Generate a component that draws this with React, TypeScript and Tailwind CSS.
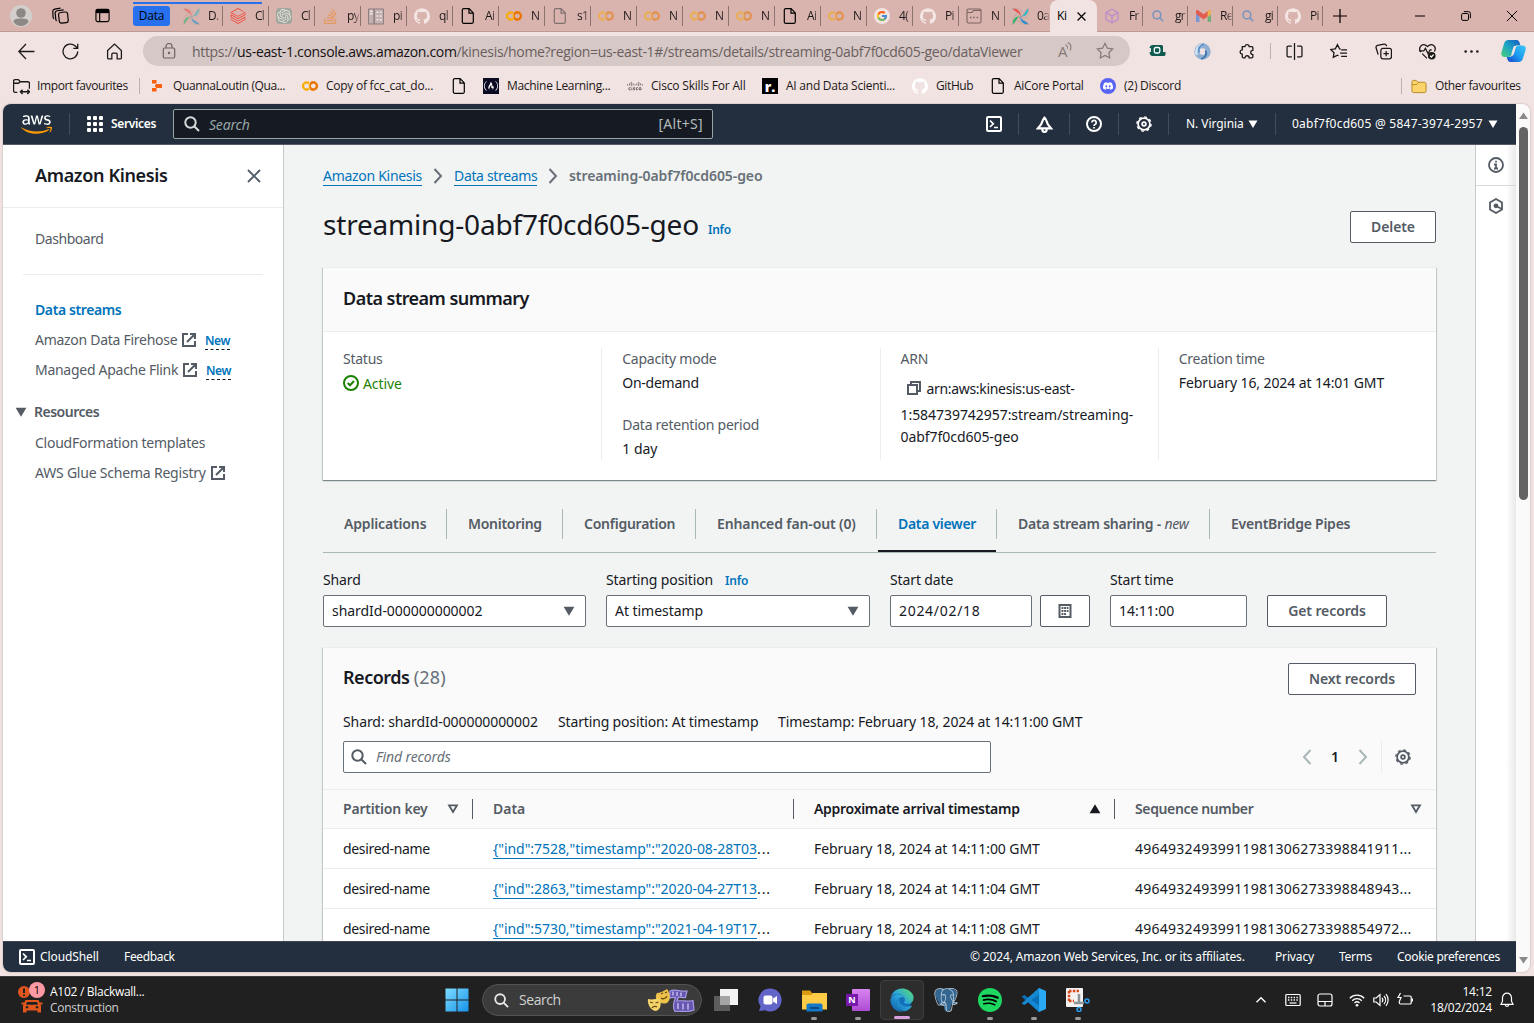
import React from "react";
import type { ReactNode } from "react";
import {
  SiApacheairflow, SiDatabricks, SiOpenai, SiStackoverflow, SiGooglecolab, SiGithub, SiSpotify,
  SiPostgresql, SiDiscord, SiCisco, SiFreecodecamp,
} from "react-icons/si";
import { FaAws, FaEdge } from "react-icons/fa";
import { FcGoogle } from "react-icons/fc";
import { Box } from "lucide-react";

/* ---------- shared icons ---------- */

type SvgProps = { className?: string; size?: number; sw?: number; children: ReactNode };

function Svg16({ className = "", size = 16, sw = 2, children }: SvgProps) {
  return (
    <svg width={size} height={size} viewBox="0 0 16 16" fill="none" stroke="currentColor" strokeWidth={sw} className={"shrink-0 " + className}>
      {children}
    </svg>
  );
}

const PageIcon = ({ className = "" }: { className?: string }) => (
  <Svg16 sw={1.2} className={className}>
    <path d="M3.5.7h5.6l4.2 4.2v9.2a1.2 1.2 0 0 1-1.2 1.2H3.5a1.2 1.2 0 0 1-1.2-1.2V1.9A1.2 1.2 0 0 1 3.5.7zM9 .9v4.2h4.2" />
  </Svg16>
);
const External = () => (
  <Svg16 className="text-[#545b64]">
    <path d="M7 2H2v12h12V9M9 2h5v5M6 10l7.500-7.500" />
  </Svg16>
);
const SearchIcon = ({ className = "", size = 16 }: { className?: string; size?: number }) => (
  <Svg16 size={size} className={className}>
    <circle cx="6.5" cy="6.5" r="5.2" />
    <path d="m15 15-4.800-4.800" />
  </Svg16>
);
const Gear = ({ className = "" }: { className?: string }) => (
  <Svg16 sw={1.8} className={"overflow-visible " + className}>
    <circle cx="8" cy="8" r="5.9" />
    <circle cx="8" cy="8" r="7.100" strokeWidth="1.4" strokeDasharray="2.79 2.79" />
    <circle cx="8" cy="8" r="1.9" strokeWidth="1.7" />
  </Svg16>
);
const Shell = () => (
  <Svg16>
    <rect x="1" y="1" width="14" height="14" rx="1" />
    <path d="m4 4.500 3.300 3.300L4 11M8 11.500h4" strokeWidth="1.7" />
  </Svg16>
);
const Chevron = ({ className = "", left = false }: { className?: string; left?: boolean }) => (
  <Svg16 className={className}>
    <path d={left ? "M11.500 1 5 8l6.500 7" : "M4.500 1 11 8l-6.500 7"} />
  </Svg16>
);
const CaretDown = ({ className = "", w = 12 }: { className?: string; w?: number }) => (
  <svg width={w} height={w} viewBox="0 0 12 12" className={"shrink-0 " + className} fill="currentColor">
    <path d="M.6 1.800h10.800L6 10.800z" />
  </svg>
);
const SortIcon = () => (
  <Svg16 size={12} sw={2.5} className="mt-1 text-[#545b64]">
    <path d="M2.800 3.200h10.400L8 12z" />
  </Svg16>
);

/* ---------- browser tab strip ---------- */

const AirflowMark = () => (
  <span className="relative block h-[17px] w-[17px]">
    <svg width="17" height="17" viewBox="0 0 16 16" className="absolute inset-0">
      <path d="M8 8C7 4 3 4 .5.800 5 .2 8.500 3 8 8z" fill="#e8564c" />
      <path d="M8 8c4-1 4-5 7.200-7.500C15.800 5 13 8.500 8 8z" fill="#33b8c4" />
      <path d="M8 8c1 4 5 4 7.500 7.200C11 15.800 7.500 13 8 8z" fill="#2b8fd0" />
      <path d="M8 8c-4 1-4 5-7.200 7.500C.2 11 3 7.500 8 8z" fill="#35b46a" />
    </svg>
    <SiApacheairflow className="absolute inset-0 h-[17px] w-[17px] text-[#5a5a60] opacity-30" />
  </span>
);
const Colab = ({ dim = false }: { dim?: boolean }) => (
  <span className={dim ? "relative h-4 w-4 opacity-50" : "relative h-4 w-4"}>
    <SiGooglecolab className="absolute inset-0 h-4 w-4 text-[#f9ab00]" />
    <SiGooglecolab className="absolute inset-0 h-4 w-4 text-[#e8710a] [clip-path:inset(0_0_0_50%)]" />
  </span>
);
const Hub = () => <SiGithub className="h-4 w-4 text-[#f4e6e4]" />;
const Lens = () => (
  <span className="text-[#5c8cc4] opacity-80"><SearchIcon size={12} /></span>
);
const Gmail = () => (
  <svg width="15" height="12" viewBox="0 0 15 12" className="opacity-80">
    <path d="M0 1v11h3.400V5z" fill="#5f8fe0" />
    <path d="M15 1v11h-3.400V5z" fill="#5fae72" />
    <path d="M0 1.500C0 0 1.500-.3 2.500.4l5 3.800 5-3.800C13.500-.3 15 0 15 1.500V4l-7.500 5.500L0 4z" fill="#e5473c" />
    <path d="M11.600 1v6L15 4.400V1.500C15 0 13.500-.3 12.500.4z" fill="#f0b43a" />
  </svg>
);
const NotebookTab = () => (
  <Svg16 sw={1.1} className="text-[#7d6462]">
    <path d="M2.500 1h11A1.500 1.500 0 0 1 15 2.500v11a1.500 1.500 0 0 1-1.500 1.500h-11A1.500 1.500 0 0 1 1 13.500v-11A1.500 1.500 0 0 1 2.500 1zM1 4.500h5l1.500-2H15" />
    <path d="M4 9.500h1.500M7.300 9.500h1.500M10.600 9.500h1.500" strokeWidth="1.5" />
  </Svg16>
);
const ListTab = () => (
  <svg width="17" height="17" viewBox="0 0 17 17" className="opacity-70">
    <path d="M.5.500h6v16h-6zM6.500.500h10v16h-10z" fill="#b9aeb0" stroke="#6b6268" />
    <path d="M2 3h3M2 5.500h3M9 4h2M12.500 4h2M9 8h2M12.500 8h2M9 12h2M12.500 12h2" stroke="#fff" strokeWidth="1.6" />
  </svg>
);

const openTabs: { icon: ReactNode; label: string }[] = [
  { icon: <span className="opacity-60"><AirflowMark /></span>, label: "D." },
  { icon: <SiDatabricks className="h-4 w-4 text-[#f0483a]" />, label: "Cl" },
  { icon: <span className="flex h-4 w-4 items-center justify-center rounded-sm bg-[#9fa79c]"><SiOpenai className="h-3.5 w-3.5 text-[#e3dfdb]" /></span>, label: "Cl" },
  { icon: <SiStackoverflow className="h-[15px] w-[15px] text-[#e59a63]" />, label: "py" },
  { icon: <ListTab />, label: "pi" },
  { icon: <Hub />, label: "ql" },
  { icon: <PageIcon className="text-black" />, label: "Ai" },
  { icon: <Colab />, label: "N" },
  { icon: <PageIcon className="text-[#80706f]" />, label: "s1" },
  { icon: <Colab dim />, label: "N" },
  { icon: <Colab dim />, label: "N" },
  { icon: <Colab dim />, label: "N" },
  { icon: <Colab dim />, label: "N" },
  { icon: <PageIcon className="text-black" />, label: "Ai" },
  { icon: <Colab dim />, label: "N" },
  { icon: <span className="flex h-4 w-4 items-center justify-center rounded-full bg-[#f1e3e1]"><FcGoogle className="h-3 w-3 opacity-80" /></span>, label: "4(" },
  { icon: <Hub />, label: "Pi" },
  { icon: <NotebookTab />, label: "N" },
];
const lastTabs: { icon: ReactNode; label: string }[] = [
  { icon: <Box className="h-4 w-4 text-[#c08fc8]" strokeWidth={2.2} />, label: "Fr" },
  { icon: <Lens />, label: "gr" },
  { icon: <Gmail />, label: "Re" },
  { icon: <Lens />, label: "gi" },
  { icon: <Hub />, label: "Pi" },
];

function StripTab({ icon, label, w, sep = true }: { icon: ReactNode; label: string; w: string; sep?: boolean }) {
  return (
    <div className={"flex h-8 shrink-0 items-center pl-[7px] " + w}>
      <span className="flex w-4 shrink-0 justify-center">{icon}</span>
      <span className="ml-[9px] w-[12px] shrink-0 bg-[linear-gradient(to_right,#1b1818_55%,#b89690)] bg-clip-text text-[12px] tracking-[-0.7px] whitespace-nowrap text-transparent">{label}</span>
      <span className={sep ? "ml-auto h-5 w-px shrink-0 bg-[#8d7471]" : "hidden"} />
    </div>
  );
}

function TabStrip() {
  return (
    <div className="flex h-8 shrink-0 border-b border-[#bd9b96] bg-[#d9b3ad]">
      <div className="flex w-[133px] shrink-0 items-center">
        <svg width="22" height="22" viewBox="0 0 22 22" className="ml-[10px]">
          <circle cx="11" cy="11" r="11" fill="#d2cfcd" />
          <circle cx="11" cy="8" r="4.800" fill="#8c8885" />
          <path d="M3.500 17c0-3 3-3.500 7.500-3.500s7.500.5 7.500 3.500c-2 2.800-4.500 4-7.500 4s-5.500-1.200-7.500-4z" fill="#8c8885" />
        </svg>
        <Svg16 sw={1.1} size={17} className="ml-[20px] text-black">
          <rect x="6.500" y="5" width="8.500" height="10" rx="2" transform="rotate(-6 10 10)" />
          <path d="M4.500 13a1.600 1.600 0 0 1-.9-1.200L3 6a2.200 2.200 0 0 1 2-2.500l6-.8M2 11a1.600 1.600 0 0 1-1-1.300L.8 4.500A2.200 2.200 0 0 1 2.500 2L8 1" />
        </Svg16>
        <Svg16 sw={1.2} size={15} className="ml-[26px] text-black">
          <rect x="1" y="1.500" width="14" height="13" rx="2" />
          <path d="M1 3.500h14" strokeWidth="4" />
          <path d="M5 5v9" />
        </Svg16>
      </div>
      <div className="flex h-8 w-[43px] shrink-0 items-center">
        <div className="flex h-5 w-[37px] items-center justify-center rounded-[3px] bg-[#2771ee] text-[12px] tracking-[-0.2px] text-black">Data</div>
      </div>
      {openTabs.map((t, i) => (
        <StripTab key={i} icon={t.icon} label={t.label} w={i === 0 ? "w-[47px]" : "w-[46px]"} />
      ))}
      <StripTab icon={<AirflowMark />} label="0a" w="w-[45px]" sep={false} />
      <div className="flex h-8 w-[47px] shrink-0 items-center rounded-t-lg bg-[#f1e3e1] pl-[7px]">
        <span className="w-[12px] text-[12px] tracking-[-0.4px] whitespace-nowrap">Ki</span>
        <Svg16 size={9} sw={2.2} className="ml-2 text-black"><path d="m1 1 14 14M15 1 1 15" /></Svg16>
      </div>
      {lastTabs.map((t, i) => (
        <StripTab key={i} icon={t.icon} label={t.label} w={i === 0 ? "w-[46px]" : "w-[45px]"} />
      ))}
      <div className="flex flex-1 items-center text-black">
        <Svg16 size={14} sw={1.4} className="ml-[10px]"><path d="M8 0v16M0 8h16" /></Svg16>
        <Svg16 size={10} sw={1.6} className="ml-[68px]"><path d="M0 8h16" /></Svg16>
        <Svg16 size={10} sw={1.6} className="ml-[36px]">
          <rect x="1" y="4" width="11" height="11" rx="2" />
          <path d="M4.500 1H12a3 3 0 0 1 3 3v7.500" />
        </Svg16>
        <Svg16 size={10} sw={1.6} className="ml-[36px]"><path d="m0 0 16 16M16 0 0 16" /></Svg16>
      </div>
    </div>
  );
}

/* ---------- address bar ---------- */

function Toolbar() {
  return (
    <div className="flex h-9 shrink-0 items-center pt-[2px] text-[#1b1818]">
      <Svg16 sw={1.2} size={17} className="ml-[18px]"><path d="M15.500 8H.800M7.500 1 .800 8l6.700 7" /></Svg16>
      <Svg16 sw={1.2} size={17} className="ml-[27px]"><path d="M14.800 8A6.900 6.900 0 1 1 12.500 2.800L14.800 5M14.800.800V5h-4.200" /></Svg16>
      <Svg16 sw={1.2} size={17} className="ml-[27px]"><path d="M1.500 7 8 1l6.500 6v7.200a.8.8 0 0 1-.8.8h-3.200V10.500a1 1 0 0 0-1-1h-3a1 1 0 0 0-1 1V15H2.300a.8.8 0 0 1-.8-.8z" /></Svg16>
      <div className="ml-[20px] flex h-[30px] w-[987px] items-center rounded-full bg-[#d6c8c6]">
        <Svg16 sw={1.2} className="ml-[18px] text-[#6e6361]">
          <rect x="2.300" y="5" width="11.400" height="10" rx="1.500" />
          <path d="M5 5V3.500a3 3 0 0 1 6 0V5" />
          <circle cx="8" cy="10" r=".6" fill="currentColor" />
        </Svg16>
        <span className="ml-[15px] w-[846px] whitespace-nowrap text-[14px] tracking-[-0.33px] text-[#6a5f5e]">
          https://<span className="text-[#151112]">us-east-1.console.aws.amazon.com</span>/kinesis/home?region=us-east-1#/streams/details/streaming-0abf7f0cd605-geo/dataViewer
        </span>
        <span className="ml-[20px] flex w-[19px] items-start text-[#857a79]">
          <span className="text-[15px] leading-5">A</span>
          <Svg16 size={9} sw={1.8} className="mt-[1px] -ml-[3px]"><path d="M1 5c3 1 4 4 3 7M5 1c6 3 7 8 4 14" /></Svg16>
        </span>
        <Svg16 sw={1.1} size={18} className="ml-[19px] text-[#857a79]"><path d="m8 1.200 2.100 4.300 4.700.7-3.400 3.300.8 4.700L8 12l-4.200 2.200.8-4.700L1.200 6.200l4.700-.7z" /></Svg16>
      </div>
      <svg width="17" height="14" viewBox="0 0 17 14" className="ml-[19px]">
        <path d="M4 1h8.500a1.500 1.500 0 0 1 1.500 1.500V8h2.500v3l-1 1H3.800a3 3 0 0 1-3-3L.5 8H2V4H.5A3.500 3.500 0 0 1 4 1z" fill="#0d5a50" />
        <rect x="5.300" y="3.500" width="5.500" height="5.500" rx="1.500" fill="none" stroke="#fff" strokeWidth="1.300" />
      </svg>
      <svg width="17" height="17" viewBox="0 0 17 17" className="ml-[28px]">
        <circle cx="8.500" cy="8.500" r="5.700" fill="none" stroke="#8fb0d2" strokeWidth="5" />
        <path d="M3 12C1 8 3 3 8 2" fill="none" stroke="#cfe0f0" strokeWidth="2.500" />
        <path d="M10 1c-4 1.500-6.500 4-4.500 8.500" fill="none" stroke="#5d8fc4" strokeWidth="1.800" />
        <path d="M7 16c4-1.500 6.500-4 4.500-8.500" fill="none" stroke="#3f74ad" strokeWidth="1.800" />
      </svg>
      <Svg16 sw={1.2} size={17} className="ml-[27px]"><path d="M4 3.500h2.500a2 2 0 0 1 4 0H13a1 1 0 0 1 1 1V7a2 2 0 0 0 0 4v2a1 1 0 0 1-1 1h-2.500a2 2 0 0 0-4 0H5a1 1 0 0 1-1-1v-2.500a2 2 0 0 1 0-4z" /></Svg16>
      <span className="ml-[15px] h-4 w-px bg-[#bdb0ae]" />
      <Svg16 sw={1.2} size={17} className="ml-[15px]"><path d="M8 0v16M5.500 3H2a1 1 0 0 0-1 1v8a1 1 0 0 0 1 1h3.500M10.500 3H14a1 1 0 0 1 1 1v8a1 1 0 0 1-1 1h-3.500" /></Svg16>
      <Svg16 sw={1.2} size={17} className="ml-[27px]"><path d="M10 6 9 5.500 7 1.500 5 5.500l-4.300.6 3.100 3-.7 4.400L7 11.400l1 .600M10.500 6.500H16M9.500 9.500H16M10.500 12.500H16" /></Svg16>
      <Svg16 sw={1.2} size={17} className="ml-[28px]"><rect x="5.500" y="5" width="10" height="10" rx="2" /><path d="M10.500 7.500v5M8 10h5M3 11 1 4.500a2 2 0 0 1 1.300-2.300L8.500 1a2 2 0 0 1 2.200 1.500L11 3" /></Svg16>
      <Svg16 sw={1.2} size={17} className="ml-[27px]"><path d="M1.800 8.500C.4 6.500.3 4 2 2.500s4-1.200 6 .8c2-2 4.300-2.300 6-.800s1.600 3.500.5 5.500M0 7.500h4.500L6 5l2.500 5 2-3.500H12M3 10l4.500 4.500" /><circle cx="12" cy="12" r="3.600" fill="currentColor" stroke="none" /><path d="m10.500 12 1.200 1.200 2-2.200" stroke="#fff" /></Svg16>
      <Svg16 size={17} className="ml-[27px]"><g fill="currentColor" stroke="none"><circle cx="2.500" cy="8" r="1.200" /><circle cx="8" cy="8" r="1.200" /><circle cx="13.500" cy="8" r="1.200" /></g></Svg16>
      <svg width="25" height="24" viewBox="0 0 25 24" className="ml-[21px]">
        <defs>
          <linearGradient id="cpa" x1="0" y1="1" x2="1" y2="0"><stop offset="0" stopColor="#4bd07c" /><stop offset=".5" stopColor="#1ea5c4" /><stop offset="1" stopColor="#1457c0" /></linearGradient>
          <linearGradient id="cpb" x1="0" y1="1" x2="1" y2="0"><stop offset="0" stopColor="#1a43c8" /><stop offset=".5" stopColor="#1c9df0" /><stop offset="1" stopColor="#3ec6f5" /></linearGradient>
        </defs>
        <path d="M7.500 1h8c2 0 2.700 1.500 3.200 3l.6 2.500c-4-1-6 .5-6.800 3l-1.500 5c-.6 2-1.700 3.500-4 3.500H3.500C.5 18-.3 15.500.5 13L3.300 4C4 2 5.500 1 7.500 1z" fill="url(#cpa)" />
        <path d="M17.500 23h-8c-2 0-2.700-1.500-3.200-3l-.6-2c4 .5 6.500-1 7.300-3.500l1.500-5c.6-2 1.700-3 4-3h3c3 0 3.800 2.500 3 5l-2.800 8.500c-.7 2-2.200 3-4.200 3z" fill="url(#cpb)" />
        <path d="m11.500 14.500 2-6.500" stroke="#f1e3e1" strokeWidth="2" strokeLinecap="round" />
      </svg>
    </div>
  );
}

/* ---------- bookmarks ---------- */

function Mark({ icon, text, w, track = "tracking-[-0.38px]" }: { icon: ReactNode; text?: string; w: string; track?: string }) {
  return (
    <div className={"flex shrink-0 items-center gap-2 " + w}>
      <span className="flex w-4 shrink-0 justify-center">{icon}</span>
      <span className={"whitespace-nowrap text-[12px] " + track}>{text}</span>
    </div>
  );
}

function Bookmarks() {
  return (
    <div className="flex h-9 shrink-0 items-center pl-[13px] text-[#1b1818]">
      <Mark w="w-[126px]" text="Import favourites" icon={<Svg16 sw={1.3} size={17}><path d="M4 13.500H2a1.500 1.500 0 0 1-1.500-1.500V3A1.500 1.500 0 0 1 2 1.500h3l2 2h7A1.500 1.500 0 0 1 15.500 5v5M.5 5H5l2-1.500M7 13h8M9 11l-2 2 2 2M13.500 11l2 2-2 2" /></Svg16>} />
      <span className="mr-[9px] h-4 w-px bg-[#bdb0ae]" />
      <Mark w="w-[153px]" text="QuannaLoutin (Qua..." icon={<svg width="12" height="12" viewBox="0 0 12 12" fill="#f9610f"><path d="M1 0h4.500v3.500H1zM1 8h4.500v3.500H1zM5.500 4H11v4H5.500L4 6.500V5z" /></svg>} />
      <Mark w="w-[149px]" text="Copy of fcc_cat_do..." track="tracking-[-0.25px]" icon={<Colab />} />
      <Mark w="w-[32px]" icon={<PageIcon className="text-black" />} />
      <Mark w="w-[144px]" text="Machine Learning..." track="tracking-[-0.3px]" icon={<span className="flex h-4 w-4 items-center justify-center bg-[#0a0a23]"><SiFreecodecamp className="h-3.5 w-3.5 text-white" /></span>} />
      <Mark w="w-[135px]" text="Cisco Skills For All" track="tracking-[-0.19px]" icon={<SiCisco className="h-4 w-4 text-[#4a4445]" />} />
      <Mark w="w-[150px]" text="AI and Data Scienti..." track="tracking-[-0.24px]" icon={<span className="flex h-4 w-4 items-end justify-center bg-black text-[14px] leading-[15px] font-black text-white">r.</span>} />
      <Mark w="w-[78px]" text="GitHub" icon={<SiGithub className="h-4 w-4 text-white" />} />
      <Mark w="w-[110px]" text="AiCore Portal" track="tracking-[-0.3px]" icon={<PageIcon className="text-black" />} />
      <Mark w="w-[120px]" text="(2) Discord" track="tracking-[-0.25px]" icon={<span className="flex h-4 w-4 items-center justify-center rounded-full bg-[#5865f2]"><SiDiscord className="h-2.5 w-2.5 text-white" /></span>} />
      <span className="mr-[9px] ml-auto h-4 w-px bg-[#bdb0ae]" />
      <Mark w="w-[123px]" text="Other favourites" icon={<svg width="17" height="15" viewBox="0 0 17 15"><path d="M1 3a2 2 0 0 1 2-2h2.500l2 2H14a2 2 0 0 1 2 2v7a2 2 0 0 1-2 2H3a2 2 0 0 1-2-2z" fill="#fbd56b" stroke="#b3881f" /><path d="M1 5.500h5L8 3.300" fill="none" stroke="#b3881f" /></svg>} />
    </div>
  );
}

/* ---------- AWS chrome ---------- */

const HSep = ({ className }: { className: string }) => <span className={"h-[22px] w-px shrink-0 bg-[#414d5c] " + className} />;

function AwsHeader() {
  return (
    <div className="flex h-[41px] shrink-0 items-center border-b border-[#545b64] bg-[#232f3e] font-['Noto_Sans'] text-white">
      <span className="relative ml-[18px] h-[31px] w-[32px] shrink-0">
        <FaAws className="absolute inset-0 h-[31px] w-[31px] [clip-path:inset(0_0_45%_0)]" />
        <FaAws className="absolute inset-0 h-[31px] w-[31px] text-[#ff9900] [clip-path:inset(55%_0_0_0)]" />
      </span>
      <HSep className="ml-[16px]" />
      <div className="ml-[17px] grid grid-cols-3 gap-[2px]">
        {Array.from({ length: 9 }, (_, i) => <span key={i} className="h-1 w-1 rounded-[1px] bg-white" />)}
      </div>
      <span className="ml-2 w-[62px] text-[12px] font-semibold tracking-[-0.35px]">Services</span>
      <div className="flex h-[30px] w-[540px] shrink-0 items-center rounded-[2px] border border-[#95a5a6] bg-[#161a22] px-[9px]">
        <SearchIcon className="ml-px text-[#d5dbdb]" />
        <span className="ml-[9px] flex-1 text-[14px] tracking-[-0.2px] text-[#95a5a6] italic">Search</span>
        <span className="pb-[2px] text-[14px] tracking-[0.3px] text-[#b3bcbd]">[Alt+S]</span>
      </div>
      <span className="ml-[273px]"><Shell /></span>
      <HSep className="ml-[16px]" />
      <Svg16 size={17} className="ml-[17px]"><path d="M8 1.500C6.200 3 5.800 6 4.800 8l-3 3.700h12.400L11.200 8c-1-2-1.400-5-3.200-6.500zM6 12v1a2 2 0 0 0 4 0v-1" /></Svg16>
      <HSep className="ml-[16px]" />
      <Svg16 className="ml-[16px]"><circle cx="8" cy="8" r="7" /><path d="M5.800 6.500a2.200 2.200 0 1 1 3.200 2c-.7.400-1 .7-1 1.500M8 11v1.600" strokeWidth="1.7" /></Svg16>
      <HSep className="ml-[16px]" />
      <Gear className="ml-[17px]" />
      <HSep className="ml-[16px]" />
      <span className="ml-[17px] w-[62px] text-[12px] tracking-[-0.05px] whitespace-nowrap">N. Virginia</span>
      <CaretDown w={10} />
      <HSep className="ml-[17px]" />
      <span className="ml-[16px] w-[196px] text-[12px] tracking-[0.24px] whitespace-nowrap">0abf7f0cd605 @ 5847-3974-2957</span>
      <CaretDown w={10} />
    </div>
  );
}

const NewBadge = ({ className }: { className: string }) => (
  <span className={"h-[17px] border-b border-dashed border-[#16191f] text-[12px] leading-[16px] font-semibold tracking-[-0.4px] text-[#0073bb] " + className}>New</span>
);

function Sidebar() {
  return (
    <div className="w-[281px] shrink-0 border-r border-[#c3caca] bg-white text-[14px] text-[#545b64]">
      <div className="flex h-[63px] items-center justify-between border-b border-[#eaeded] pr-[21px] pl-8">
        <span className="pb-[2px] text-[18px] font-semibold tracking-[-0.35px] text-[#16191f]">Amazon Kinesis</span>
        <Svg16 sw={1.9} className="text-[#545b64]"><path d="m2 2 12 12M14 2 2 14" /></Svg16>
      </div>
      <div className="mt-[21px] h-5 pl-8 leading-5 tracking-[-0.45px]">Dashboard</div>
      <div className="mx-5 mt-[25px] h-px bg-[#eaeded]" />
      <div className="mt-[25px] h-[30px] pl-8 leading-5 font-semibold tracking-[-0.4px] text-[#0073bb]">Data streams</div>
      <div className="flex h-[30px] items-start pl-8 leading-5">
        <span className="mr-1 w-[142px] tracking-[-0.28px] whitespace-nowrap">Amazon Data Firehose</span>
        <span className="mt-[2px]"><External /></span><NewBadge className="mt-[3px] ml-2" />
      </div>
      <div className="flex h-[42px] items-start pl-8 leading-5">
        <span className="mr-1 w-[143px] tracking-[-0.28px] whitespace-nowrap">Managed Apache Flink</span>
        <span className="mt-[2px]"><External /></span><NewBadge className="mt-[3px] ml-2" />
      </div>
      <div className="flex h-[31px] items-start pl-3 leading-5">
        <CaretDown className="mt-1" />
        <span className="ml-[7px] font-semibold tracking-[-0.5px]">Resources</span>
      </div>
      <div className="h-[30px] pl-8 leading-5 tracking-[-0.24px]">CloudFormation templates</div>
      <div className="flex h-[30px] items-start pl-8 leading-5">
        <span className="mr-1 w-[171px] tracking-[-0.21px] whitespace-nowrap">AWS Glue Schema Registry</span>
        <span className="mt-[2px]"><External /></span>
      </div>
    </div>
  );
}

const cardShadow = "shadow-[0_1px_1px_0_rgba(0,28,36,0.3),1px_1px_1px_0_rgba(0,28,36,0.15),-1px_1px_1px_0_rgba(0,28,36,0.15)]";

const Button = ({ children, className }: { children: ReactNode; className: string }) => (
  <button className={"flex h-8 shrink-0 items-center justify-center rounded-[2px] border border-[#545b64] bg-white pb-[2px] text-[14px] font-semibold tracking-[-0.1px] text-[#545b64] " + className}>{children}</button>
);

const Label = ({ children }: { children: ReactNode }) => <div className="mb-[5px] h-5 leading-5 tracking-[-0.12px] whitespace-nowrap">{children}</div>;

const Field = ({ children, caret = false }: { children: ReactNode; caret?: boolean }) => (
  <div className="flex h-8 items-center justify-between rounded-[2px] border border-[#687078] bg-white pr-[10px] pl-2">
    <span className="pb-[2px] tracking-[-0.04px]">{children}</span>
    {caret && <CaretDown className="text-[#545b64]" />}
  </div>
);

function Summary() {
  const gray = "h-5 leading-5 tracking-[-0.25px] text-[#545b64]";
  const col = "h-[112px] border-l border-[#eaeded] pt-px pl-5";
  return (
    <section className={"mt-6 h-[213px] border-t border-[#eaeded] bg-white " + cardShadow}>
      <div className="flex h-16 items-center border-b border-[#eaeded] bg-[#fafafa] pb-[3px] pl-5 text-[18px] font-semibold tracking-[-0.53px]">Data stream summary</div>
      <div className="grid grid-cols-4 pt-4">
        <div className="pt-px pl-5">
          <div className={gray}>Status</div>
          <div className="mt-1 flex h-5 items-center gap-1 tracking-[-0.1px] text-[#1d8102]">
            <Svg16><circle cx="8" cy="8" r="7" /><path d="m4.700 8 2.300 2.300 4-4.300" /></Svg16>Active
          </div>
        </div>
        <div className={col}>
          <div className={gray}>Capacity mode</div>
          <div className="mt-1 h-5 leading-5 tracking-[-0.25px]">On-demand</div>
          <div className={"mt-[22px] " + gray}>Data retention period</div>
          <div className="mt-1 h-5 leading-5">1 day</div>
        </div>
        <div className={col}>
          <div className={gray}>ARN</div>
          <div className="mt-[9px] flex h-5 items-center gap-[5px] pl-[5px] tracking-[-0.32px]">
            <Svg16 className="text-[#545b64]"><path d="M2 5h9v9H2zM5 5V2h9v9h-3" /></Svg16>
            <span>arn:aws:kinesis:us-east-</span>
          </div>
          <div className="mt-[6px] leading-[22px] tracking-[-0.05px]">1:584739742957:stream/streaming-<br />0abf7f0cd605-geo</div>
        </div>
        <div className={col}>
          <div className={gray}>Creation time</div>
          <div className="mt-1 h-5 leading-5 tracking-[-0.1px] whitespace-nowrap">February 16, 2024 at 14:01 GMT</div>
        </div>
      </div>
    </section>
  );
}

const pageTabs: { label: ReactNode; w: string; track: string; active?: boolean }[] = [
  { label: "Applications", w: "w-[124px]", track: "tracking-[-0.15px]" },
  { label: "Monitoring", w: "w-[116px]", track: "tracking-[-0.28px]" },
  { label: "Configuration", w: "w-[133px]", track: "tracking-[-0.25px]" },
  { label: "Enhanced fan-out (0)", w: "w-[181px]", track: "tracking-[-0.12px]" },
  { label: "Data viewer", w: "w-[120px]", track: "tracking-[-0.3px]", active: true },
  { label: <>Data stream sharing - <span className="font-normal italic">new</span></>, w: "w-[213px]", track: "tracking-[-0.22px]" },
  { label: "EventBridge Pipes", w: "w-[170px]", track: "tracking-[-0.24px]" },
];

function PageTabs() {
  return (
    <div className="mt-4 flex h-[57px] border-b border-[#aab7b8]">
      {pageTabs.map((t, i) => (
        <div key={i} className={"relative flex h-14 shrink-0 items-center pb-[2px] pl-[21px] font-semibold " + t.w + " " + t.track + (t.active ? " text-[#0073bb]" : " text-[#545b64]")}>
          <span className="whitespace-nowrap">{t.label}</span>
          {i < pageTabs.length - 1 && <span className="absolute top-[13px] right-0 h-[30px] w-px bg-[#aab7b8]" />}
          {t.active && <span className="absolute right-[1px] bottom-0 left-[1px] h-[2px] bg-[#16191f]" />}
        </div>
      ))}
    </div>
  );
}

const records = [
  { data: '{"ind":7528,"timestamp":"2020-08-28T03', time: "14:11:00", seq: "49649324939911981306273398841911..." },
  { data: '{"ind":2863,"timestamp":"2020-04-27T13', time: "14:11:04", seq: "49649324939911981306273398848943..." },
  { data: '{"ind":5730,"timestamp":"2021-04-19T17', time: "14:11:08", seq: "49649324939911981306273398854972..." },
];

function Records() {
  const cols = "grid grid-cols-[150px_321px_321px_1fr] pl-5";
  const head = "flex h-5 items-start leading-5";
  return (
    <section className={"mt-5 border-t border-[#eaeded] bg-white " + cardShadow}>
      <div className="bg-[#fafafa] px-5 pt-[15px] pb-4">
        <div className="flex h-8 items-center justify-between">
          <h2 className="pb-[3px] text-[18px] font-semibold tracking-[-0.48px]">Records <span className="font-normal tracking-[0.2px] text-[#687078]">(28)</span></h2>
          <Button className="w-32">Next records</Button>
        </div>
        <div className="mt-[17px] flex h-5 gap-5 leading-5 whitespace-nowrap">
          <span className="w-[195px] tracking-[-0.08px]">Shard: shardId-000000000002</span>
          <span className="w-[200px] tracking-[-0.15px]">Starting position: At timestamp</span>
          <span className="tracking-[-0.11px]">Timestamp: February 18, 2024 at 14:11:00 GMT</span>
        </div>
        <div className="mt-[9px] flex h-8 items-center">
          <div className="flex h-8 w-[648px] items-center rounded-[2px] border border-[#687078] bg-white pl-2">
            <SearchIcon className="-ml-px text-[#545b64]" />
            <span className="ml-[9px] pb-[2px] tracking-[-0.12px] text-[#687078] italic">Find records</span>
          </div>
          <Chevron left className="ml-[308px] text-[#aab7b8]" />
          <span className="ml-4 w-2 pb-[2px] font-semibold">1</span>
          <Chevron className="ml-[16px] text-[#aab7b8]" />
          <span className="ml-[10px] h-8 w-px bg-[#eaeded]" />
          <Gear className="ml-[13px] text-[#545b64]" />
        </div>
      </div>
      <div className={"h-10 items-center border-y border-[#eaeded] bg-[#fafafa] font-semibold text-[#545b64] " + cols}>
        <div className={head + " mr-5 justify-between border-r border-[#545b64] pr-[13px] tracking-[-0.2px]"}>Partition key<SortIcon /></div>
        <div className={head + " mr-5 border-r border-[#545b64]"}>Data</div>
        <div className={head + " mr-5 justify-between border-r border-[#545b64] pr-[13px] tracking-[-0.29px] text-[#16191f]"}>
          Approximate arrival timestamp
          <CaretDown className="mt-1 rotate-180" />
        </div>
        <div className={head + " justify-between pr-[14px] tracking-[-0.37px]"}>Sequence number<SortIcon /></div>
      </div>
      {records.map((r) => (
        <div key={r.time} className={"h-10 items-center border-b border-[#eaeded] leading-5 whitespace-nowrap " + cols}>
          <span className="tracking-[-0.33px]">desired-name</span>
          <span className="flex pt-[2px]"><span className="w-[264px] border-b border-[#0073bb] leading-[18px] tracking-[-0.05px] text-[#0073bb]">{r.data}</span><span className="leading-[18px] tracking-[0.9px]">...</span></span>
          <span className="tracking-[-0.07px]">February 18, 2024 at {r.time} GMT</span>
          <span className="tracking-[0.26px]">{r.seq}</span>
        </div>
      ))}
    </section>
  );
}

function Main() {
  const link = "h-[19px] border-b border-[#0073bb] leading-[18px] text-[#0073bb]";
  return (
    <div className="min-w-0 flex-1 overflow-hidden bg-[#f2f3f3] pt-[21px] pr-[39px] pl-[39px] text-[14px] text-[#16191f]">
      <div className="flex h-5 items-center whitespace-nowrap">
        <span className={link + " w-[99px] tracking-[-0.29px]"}>Amazon Kinesis</span>
        <Chevron className="mx-2 text-[#687078]" />
        <span className={link + " w-[83px] tracking-[-0.34px]"}>Data streams</span>
        <Chevron className="mx-2 text-[#687078]" />
        <span className="pb-[2px] font-semibold tracking-[-0.08px] text-[#687078]">streaming-0abf7f0cd605-geo</span>
      </div>
      <div className="mt-[25px] flex h-8 items-center">
        <h1 className="w-[376px] pb-[7px] text-[28px] leading-8 tracking-[-0.19px] whitespace-nowrap">streaming-0abf7f0cd605-geo</h1>
        <span className="ml-[9px] flex-1 pt-[6px] text-[12px] font-semibold tracking-[-0.3px] text-[#0073bb]">Info</span>
        <Button className="w-[86px]">Delete</Button>
      </div>
      <Summary />
      <PageTabs />
      <div className="mt-[17px] flex items-end">
        <div className="w-[263px]"><Label>Shard</Label><Field caret>shardId-000000000002</Field></div>
        <div className="ml-5 w-[264px]">
          <Label>Starting position<span className="ml-3 text-[12px] font-semibold tracking-[-0.2px] text-[#0073bb]">Info</span></Label>
          <Field caret>At timestamp</Field>
        </div>
        <div className="ml-5 w-[142px]"><Label>Start date</Label><Field><span className="tracking-[0.7px]">2024/02/18</span></Field></div>
        <Button className="ml-2 w-[50px]">
          <svg width="16" height="16" viewBox="0 0 16 16" fill="none" stroke="#545b64" strokeWidth="2" className="mt-[2px]">
            <path d="M2.500 2h11v12h-11z" />
            <path d="M4.500 5h7M4.500 8h7M4.500 11h4.500" strokeWidth="1.900" strokeDasharray="1.900 .700" />
          </svg>
        </Button>
        <div className="ml-5 w-[137px]"><Label>Start time</Label><Field>14:11:00</Field></div>
        <Button className="ml-5 w-[120px]">Get records</Button>
      </div>
      <Records />
    </div>
  );
}

function RightRail() {
  return (
    <div className="flex w-[41px] shrink-0 flex-col border-l border-[#c3caca] bg-[linear-gradient(to_right,#fff_75%,#e9e9e9)] text-[#545b64]">
      <div className="flex h-[41px] items-center justify-center border-b border-[#d5dbdb]">
        <Svg16 sw={1.8}><circle cx="8" cy="8" r="7" /><path d="M8 3.800v1.800M6 7.500h2V11M6 11.500h4" /></Svg16>
      </div>
      <div className="flex h-10 items-center justify-center">
        <Svg16 sw={1.8}><path d="M8 1 14 4.500v7L8 15l-6-3.500v-7z" /><path d="m8 8 6 3" /><circle cx="8" cy="7.800" r="1.500" fill="currentColor" /></Svg16>
      </div>
    </div>
  );
}

function AwsFooter() {
  return (
    <div className="flex h-[31px] shrink-0 items-center border-t border-[#414750] bg-[#232f3e] pl-4 font-['Noto_Sans'] text-[12px] whitespace-nowrap text-white">
      <Shell />
      <span className="ml-[5px] w-[84px] tracking-[-0.1px]">CloudShell</span>
      <span className="flex-1 tracking-[-0.35px]">Feedback</span>
      <span className="w-[305px] tracking-[-0.15px]">© 2024, Amazon Web Services, Inc. or its affiliates.</span>
      <span className="w-[64px] tracking-[-0.15px]">Privacy</span>
      <span className="w-[58px] tracking-[-0.3px]">Terms</span>
      <span className="w-[119px] tracking-[-0.3px]">Cookie preferences</span>
    </div>
  );
}

function Scrollbar() {
  return (
    <div className="flex w-[14px] shrink-0 flex-col items-center bg-[#fafafa] text-[#8a8a8a]">
      <svg width="9" height="8" viewBox="0 0 9 8" className="mt-2" fill="currentColor"><path d="M4.500.5 9 7H0z" /></svg>
      <span className="mt-[7px] h-[373px] w-[9px] rounded-full bg-[#636363]" />
      <svg width="9" height="8" viewBox="0 0 9 8" className="mt-auto mb-[8px]" fill="currentColor"><path d="M4.500 7.500 9 1H0z" /></svg>
    </div>
  );
}

/* ---------- taskbar ---------- */

const Slot = ({ children, dot = "" }: { children: ReactNode; dot?: string }) => (
  <span className="relative flex h-10 w-11 shrink-0 items-center justify-center">
    {children}
    {dot && <span className={"absolute bottom-0 h-[3px] rounded-full " + dot} />}
  </span>
);

function Taskbar() {
  const run = "w-[6px] bg-[#9b9b9b]";
  return (
    <div className="flex h-[47px] shrink-0 items-center border-t border-[#3d3939] bg-[#202020] text-[12px] text-white">
      <div className="flex w-[435px] items-center">
        <span className="relative ml-[18px] h-8 w-8 shrink-0">
          <svg width="26" height="31" viewBox="0 0 26 31" className="absolute -top-px left-0">
            <circle cx="6" cy="9" r="6" fill="#e0561c" />
            <path d="M6 5.500V10M6 11.500V13" stroke="#202020" strokeWidth="2" />
            <path d="M7.500 17h13l2.500 5.500v7h-3.500v-2h-11v2H5v-7z" fill="#e0561c" />
            <path d="M9 19h10l1 2.700H8z" fill="#202020" />
            <path d="M3.500 20.500h3M21.500 20.500h3" stroke="#e0561c" strokeWidth="2" />
            <circle cx="9" cy="24.300" r="1.200" fill="#202020" /><circle cx="19" cy="24.300" r="1.200" fill="#202020" />
          </svg>
          <span className="absolute -top-[2px] left-[11px] flex h-4 w-4 items-center justify-center rounded-full bg-[#ff99a4] text-[11px] text-black">1</span>
        </span>
        <div className="leading-4 whitespace-nowrap">
          <div className="text-[12px] tracking-[-0.28px]">A102 / Blackwall...</div>
          <div className="text-[12px] tracking-[-0.28px] text-[#cfcfcf]">Construction</div>
        </div>
      </div>
      <Slot>
        <svg width="24" height="24" viewBox="0 0 24 24">
          <defs><linearGradient id="win" x1="0" y1="0" x2="1" y2="1"><stop offset="0" stopColor="#7fdcff" /><stop offset="1" stopColor="#1593ea" /></linearGradient></defs>
          <path d="M.5.500h11v11H.5zM12.500.500h11v11h-11zM.5 12.500h11v11H.5zM12.500 12.500h11v11h-11z" fill="url(#win)" />
        </svg>
      </Slot>
      <div className="ml-[3px] flex h-8 w-[220px] shrink-0 items-center rounded-full border border-[#535353] bg-[#3b3b3b] pl-[11px]">
        <SearchIcon size={15} className="text-[#e6e6e6]" />
        <span className="ml-[10px] w-[128px] shrink-0 pb-px text-[14px] tracking-[-0.45px] text-[#d2d2d2]">Search</span>
        <svg width="48" height="25" viewBox="0 0 48 25" className="shrink-0">
          <path d="M23 3c5-2.500 10 1 17 0l-1.500 6.500c-3 .5-5 0-7-.5L30 13c5-1 10 1 16-.5L47 22c-7 3-13 .5-19 1.500-2-3-1.500-9 .5-14C26 9 24 9.500 22.500 10z" fill="#6656b0" stroke="#a99be8" strokeWidth="1.200" />
          <path d="M26 3.500v4M30 4v4M34 4.500v4M31 15v6M36 15.500v6M41 15.500v6" stroke="#d8d0ff" strokeWidth="1.200" />
          <path d="M10 5c3 0 7-2 10-4 3 4 4 10 1 13s-9 1-11-2-1-5 0-7z" fill="#eec24a" />
          <path d="M1 11c4 1 8 0 11-1 3 4 2 12-3 13-5 0-9-7-8-12z" fill="#f3d46b" />
          <path d="m3 14 3 1M8.500 15l3-1M5 20c1-2 4-2 5-1M14 6l2-1M18 5l2-1M14 10c2 1.500 5 .5 6-2" stroke="#6b4a10" strokeWidth="1.300" fill="none" />
        </svg>
      </div>
      <span className="w-[2px]" />
      <Slot>
        <svg width="24" height="24" viewBox="0 0 24 24"><rect x="0" y="8" width="16" height="15" fill="#5c5c5c" /><rect x="6" y="1" width="18" height="16" fill="#f2f2f2" /><rect x="6" y="8" width="10" height="9" fill="#a5a5a5" /></svg>
      </Slot>
      <Slot>
        <svg width="24" height="24" viewBox="0 0 24 24"><path d="M12 .5A11.500 11.500 0 1 1 7 22.300L1 23l1.500-4.500A11.500 11.500 0 0 1 12 .5z" fill="#6264c8" /><rect x="5.500" y="7.500" width="9" height="9" rx="2" fill="#fff" /><path d="m15 10.500 4-2.500v8l-4-2.500z" fill="#fff" /></svg>
      </Slot>
      <Slot dot={run}>
        <svg width="25" height="23" viewBox="0 0 25 23"><path d="M0 1.500h8l2.500 3H25v6H0z" fill="#d99a10" /><path d="M0 6h9l2-2h14v16.500H0z" fill="#fdcb45" /><path d="M4.500 22.500v-6a2 2 0 0 1 2-2h12a2 2 0 0 1 2 2v6z" fill="#1378c8" /><path d="M8 18h9v2H8z" fill="#0b4c88" /></svg>
      </Slot>
      <Slot dot={run}>
        <span className="relative flex h-[22px] w-6">
          <span className="absolute top-0 right-0 h-[22px] w-[18px] rounded-[1px] bg-[linear-gradient(#d884f0,#ae4bd5)]" />
          <span className="absolute top-[5px] left-0 flex h-3 w-3 items-center justify-center bg-[#7719aa] text-[9px] font-bold">N</span>
        </span>
      </Slot>
      <span className="relative flex h-10 w-11 items-center justify-center rounded-[4px] border border-[#3d3d3d] bg-[#2d2d2d]">
        <svg width="0" height="0" className="absolute"><defs><linearGradient id="edge" x1="0" y1="1" x2="1" y2="0"><stop offset="0" stopColor="#0c59a4" /><stop offset=".5" stopColor="#2aa5dd" /><stop offset="1" stopColor="#5fe06a" /></linearGradient></defs></svg>
        <span className="absolute h-5 w-5 rounded-full bg-[#1370b8]" />
        <FaEdge className="relative h-6 w-6 fill-[url(#edge)]" />
        <span className="absolute bottom-0 h-[3px] w-4 rounded-full bg-[#d8a0df]" />
      </span>
      <Slot>
        <span className="relative flex h-6 w-6 items-center justify-center">
          <svg width="24" height="24" viewBox="0 0 24 24" className="absolute inset-0"><path d="M5 1c3-1 4.500 0 6 .3C14 .5 20-.5 22 3c2 3-1 8-2.500 11l3 .5c-1 2-4 2.500-5.500 2 0 3 0 6-3 7-3 .5-4-1.500-4-5l-1-2c-1 2-3 1.500-4-1C3 12 .5 7 1 4.500 1.500 2 3 1.300 5 1z" fill="#336791" /></svg>
          <SiPostgresql className="relative h-6 w-6 text-[#c3d3e0]" />
        </span>
      </Slot>
      <Slot dot={run}><span className="flex h-5 w-5 items-center justify-center rounded-full bg-black"><SiSpotify className="h-6 w-6 shrink-0 text-[#1ed760]" /></span></Slot>
      <Slot dot={run}>
        <svg width="24" height="24" viewBox="0 0 24 24"><path d="M17 0 6.500 10 2.500 7 0 8.200V9l13.500 12L17 24l1-5V6z" fill="#0a6fb8" /><path d="M17 24 6.500 14l-4 3L0 15.800V15L13.500 3 17 0v6.500L9.500 12l7.500 5.500z" fill="#1488d0" /><path d="m17 0 7 3v18l-7 3z" fill="#2aa9f2" /></svg>
      </Slot>
      <Slot dot={run}>
        <svg width="24" height="24" viewBox="0 0 24 24"><rect x="0" y="0" width="17" height="19" rx="1" fill="#f5f3f2" /><path d="M3 3h10M3 13V3M3 13h5" stroke="#d9481c" strokeWidth="2.500" strokeDasharray="2.500 1.300" fill="none" /><path d="M13 6v10M8 15h10" stroke="#8f9498" strokeWidth="2.500" /><circle cx="21" cy="13" r="2" fill="none" stroke="#2a9be8" strokeWidth="1.600" /><circle cx="13" cy="21.500" r="2" fill="none" stroke="#2a9be8" strokeWidth="1.600" /></svg>
      </Slot>
      <div className="ml-auto flex items-center">
        <Svg16 size={12} sw={1.8} className="mr-[18px]"><path d="m2 11 6-6 6 6" /></Svg16>
        <Svg16 sw={1.2} className="mr-[16px]"><rect x=".8" y="2.500" width="14.400" height="11" rx="1" /><path d="M3 5.500h10M3 8h10" strokeWidth="1.400" strokeDasharray="1.400 1.400" /><path d="M4.500 11h7" /></Svg16>
        <Svg16 sw={1.2} className="mr-[16px]"><rect x="1" y="2" width="14" height="12" rx="2" /><path d="M1 9.500h14M8 9.500V14" /></Svg16>
        <Svg16 sw={1.3} className="mr-[8px]"><path d="M.8 6.200a10.200 10.200 0 0 1 14.400 0M3.200 8.700a6.800 6.800 0 0 1 9.600 0M5.500 11a3.600 3.600 0 0 1 5 0" /><circle cx="8" cy="13.200" r="1.300" fill="currentColor" stroke="none" /></Svg16>
        <Svg16 sw={1.2} className="mr-[8px]"><path d="M.8 6h2.400L7 2.500v11L3.200 10H.8zM9 5.800a3.500 3.500 0 0 1 0 4.400M11 4a6 6 0 0 1 0 8M13 2.200a9 9 0 0 1 0 11.600" /></Svg16>
        <Svg16 sw={1.2} className="mr-[15px]"><path d="M6.500 4H13a1.200 1.200 0 0 1 1.200 1.200v5.600A1.200 1.200 0 0 1 13 12H3.500A1.200 1.200 0 0 1 2.300 10.800V9M15.500 6.500v3M3.500 1 1 5.500h3L2.500 9" /></Svg16>
        <div className="w-[64px] text-right leading-4 tracking-[-0.2px]"><div>14:12</div><div>18/02/2024</div></div>
        <Svg16 sw={1.2} className="mr-[19px] ml-[7px]"><path d="M8 1.200a4.500 4.500 0 0 0-4.500 4.500v3.500L2 12.300h12l-1.500-3.100V5.700A4.500 4.500 0 0 0 8 1.200zM6.200 12.500a1.800 1.800 0 0 0 3.600 0" /></Svg16>
      </div>
    </div>
  );
}

export default function App() {
  return (
    <div className="relative flex h-[1023px] w-[1534px] flex-col overflow-hidden bg-[#f1e3e1] font-['Open_Sans',sans-serif] text-black">
      <span className="absolute top-[2px] left-[133px] h-[2px] w-[129px] bg-[#2771ee]" />
      <TabStrip />
      <Toolbar />
      <Bookmarks />
      <div className="mr-1 ml-[3px] flex h-[868px] shrink-0 overflow-hidden rounded-lg shadow-[0_0_2px_rgba(80,50,50,0.4)]">
        <div className="flex min-w-0 flex-1 flex-col">
          <AwsHeader />
          <div className="flex min-h-0 flex-1 overflow-hidden font-['Noto_Sans',sans-serif]">
            <Sidebar />
            <Main />
            <RightRail />
          </div>
          <AwsFooter />
        </div>
        <Scrollbar />
      </div>
      <span className="h-1 shrink-0" />
      <Taskbar />
    </div>
  );
}
